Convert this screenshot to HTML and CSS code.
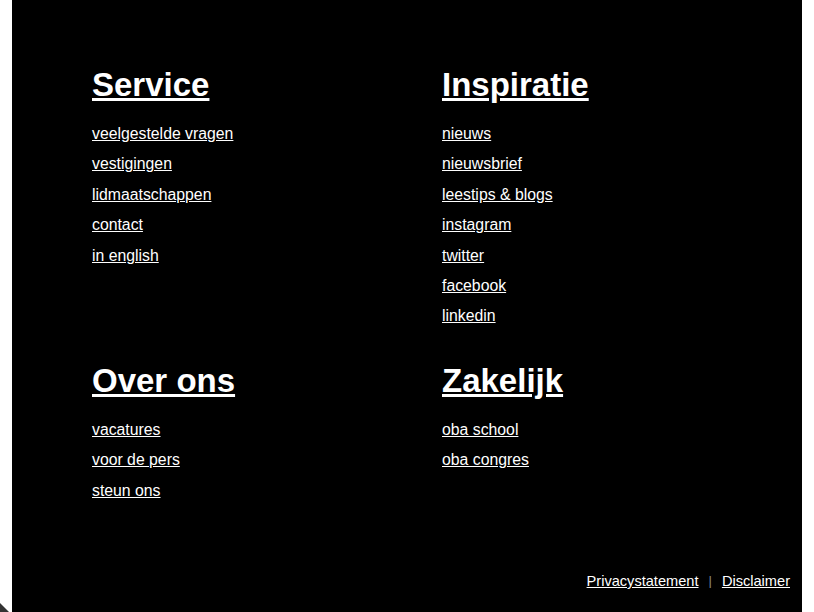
FILE: index.html
```html
<!DOCTYPE html>
<html lang="nl">
<head>
<meta charset="utf-8">
<title>Footer</title>
<link rel="stylesheet" href="styles.css">
</head>
<body>
<footer class="footer">
  <div class="grid">
    <section class="col">
      <h2 class="title"><a href="#">Service</a></h2>
      <ul class="links">
        <li><a href="#">veelgestelde vragen</a></li>
        <li><a href="#">vestigingen</a></li>
        <li><a href="#">lidmaatschappen</a></li>
        <li><a href="#">contact</a></li>
        <li><a href="#">in english</a></li>
      </ul>
    </section>
    <section class="col">
      <h2 class="title"><a href="#">Inspiratie</a></h2>
      <ul class="links">
        <li><a href="#">nieuws</a></li>
        <li><a href="#">nieuwsbrief</a></li>
        <li><a href="#">leestips &amp; blogs</a></li>
        <li><a href="#">instagram</a></li>
        <li><a href="#">twitter</a></li>
        <li><a href="#">facebook</a></li>
        <li><a href="#">linkedin</a></li>
      </ul>
    </section>
    <section class="col">
      <h2 class="title"><a href="#">Over ons</a></h2>
      <ul class="links">
        <li><a href="#">vacatures</a></li>
        <li><a href="#">voor de pers</a></li>
        <li><a href="#">steun ons</a></li>
      </ul>
    </section>
    <section class="col">
      <h2 class="title"><a href="#">Zakelijk</a></h2>
      <ul class="links">
        <li><a href="#">oba school</a></li>
        <li><a href="#">oba congres</a></li>
      </ul>
    </section>
  </div>
  <div class="legal">
    <a href="#">Privacystatement</a>
    <span class="sep">|</span>
    <a href="#">Disclaimer</a>
  </div>
</footer>
<div class="corner"></div>
</body>
</html>
```

FILE: styles.css
```css
html, body {
  margin: 0;
  padding: 0;
  background: #ffffff;
  height: 100%;
  overflow: hidden;
}
body {
  font-family: Arial, "Liberation Sans", sans-serif;
  position: relative;
}
.footer {
  margin-left: 12px;
  width: 790px;
  height: 612px;
  background: #000000;
  color: #ffffff;
  box-sizing: border-box;
  padding: 66px 12px 0 80px;
  display: flex;
  flex-direction: column;
}
.grid {
  display: grid;
  grid-template-columns: 350px 350px;
  row-gap: 30px;
}
.title {
  margin: 0 0 15px;
  font-size: 33px;
  line-height: 38px;
  font-weight: bold;
}
.title a {
  color: #ffffff;
}
.links {
  list-style: none;
  margin: 0;
  padding: 0;
}
.links li {
  font-size: 15.8px;
  line-height: 30.4px;
}
.links a {
  color: #ffffff;
}
.legal {
  margin-top: auto;
  margin-bottom: 22px;
  display: flex;
  justify-content: flex-end;
  align-items: center;
  gap: 10px;
  font-size: 14.6px;
  line-height: 18px;
}
.legal a {
  color: #ffffff;
}
.sep {
  color: #8a8a8a;
  font-size: 13px;
}
.corner {
  position: absolute;
  left: 0;
  bottom: 0;
  width: 9px;
  height: 9px;
  background: linear-gradient(to top right, #333 45%, transparent 55%);
}
```
